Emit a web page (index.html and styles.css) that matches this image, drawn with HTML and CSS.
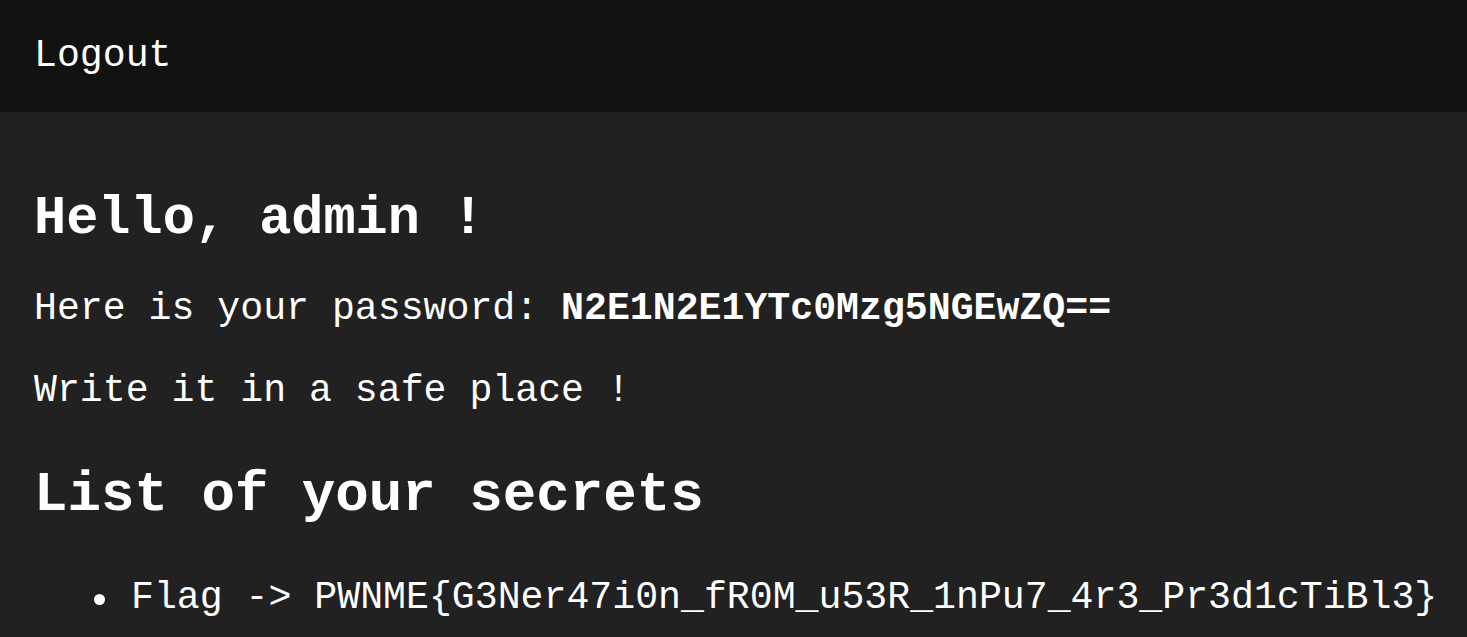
FILE: index.html
```html
<!DOCTYPE html>
<html lang="en">
<head>
<meta charset="utf-8">
<title>Secrets</title>
<link rel="stylesheet" href="styles.css">
</head>
<body>
<nav class="topbar">
  <a class="logout" href="#">Logout</a>
</nav>
<main class="content">
  <h2 class="greeting">Hello, admin !</h2>
  <p class="line line-first">Here is your password: <strong class="password">N2E1N2E1YTc0Mzg5NGEwZQ==</strong></p>
  <p class="line line-second">Write it in a safe place !</p>
  <h2 class="secrets-title">List of your secrets</h2>
  <ul class="secrets">
    <li class="secret"><span class="bullet"></span><span class="secret-text">Flag -&gt; PWNME{G3Ner47i0n_fR0M_u53R_1nPu7_4r3_Pr3d1cTiBl3}</span></li>
  </ul>
</main>
</body>
</html>
```
FILE: styles.css
```css
html, body {
  margin: 0;
  padding: 0;
}

body {
  background: #212121;
  color: #ffffff;
  font-family: "Liberation Mono", "DejaVu Sans Mono", monospace;
  font-size: 38.2px;
  line-height: 48px;
}

.topbar {
  background: #121212;
  padding: 32px 34px;
  height: 48px;
  display: flex;
  align-items: flex-start;
}

.logout {
  color: #ffffff;
  text-decoration: none;
}

.content {
  display: flex;
  flex-direction: column;
  align-items: flex-start;
  padding: 0 34px;
}

.greeting {
  margin: 75px 0 0;
  font-size: 53.6px;
  line-height: 64px;
  font-weight: bold;
}

.line {
  margin: 0;
}

.line-first {
  margin-top: 34px;
}

.line-second {
  margin-top: 34px;
}

.password {
  font-weight: bold;
}

.secrets-title {
  margin: 48px 0 0;
  font-size: 55.8px;
  line-height: 66px;
  font-weight: bold;
}

.secrets {
  list-style: none;
  margin: 45px 0 0;
  padding: 0 0 0 60px;
}

.secret {
  display: flex;
  align-items: center;
  gap: 26px;
  white-space: nowrap;
}

.bullet {
  width: 11px;
  height: 11px;
  border-radius: 50%;
  background: #ffffff;
  margin-top: 2px;
}
```
